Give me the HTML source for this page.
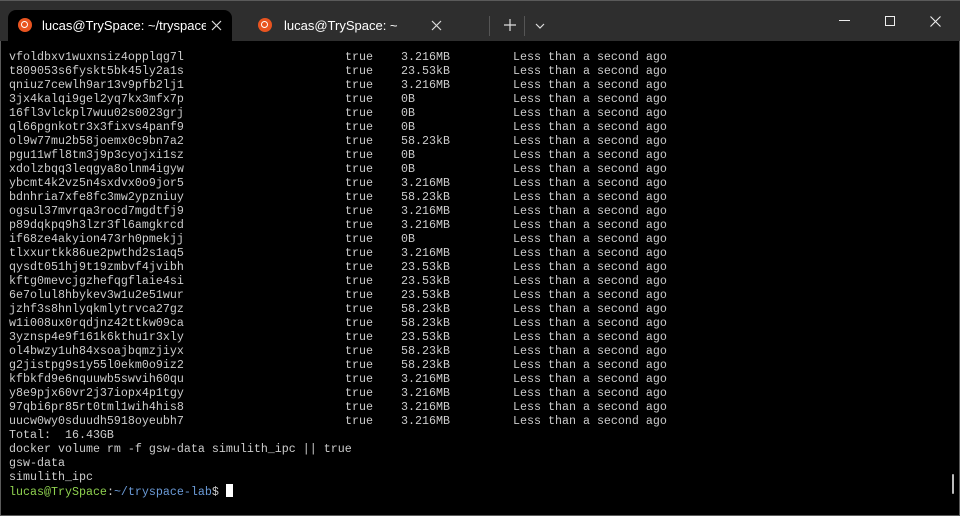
<!DOCTYPE html>
<html><head><meta charset="utf-8"><style>
*{margin:0;padding:0;box-sizing:border-box}
body{width:960px;height:516px;background:#0c0c0c;overflow:hidden;position:relative;font-family:"Liberation Sans",sans-serif}
#frame{position:absolute;left:0;top:0;width:960px;height:516px;border:1px solid #5a5a5a;background:#000}
#bar{position:absolute;left:0;top:0;width:960px;height:41px;background:#2e2e2e;border-top:1px solid #5a5a5a}
.tab{position:absolute;top:9px;height:32px;color:#fff;font-size:13px}
.tab.active{left:8px;width:224px;background:#000;border-radius:8px 8px 0 0}
.tab .t{position:absolute;left:34px;top:8px;white-space:nowrap;overflow:hidden;width:164px}
.ico{position:absolute;width:14px;height:14px;border-radius:50%;background:#e95420}
.ico:after{content:"";position:absolute;left:3px;top:3px;width:5px;height:5px;border:1.5px solid #fff;border-radius:50%}
#term{position:absolute;left:9px;top:50px;font-family:"Liberation Mono",monospace;font-size:11.67px;line-height:14px;color:#cccccc}
.r{position:relative;height:14px;white-space:pre}
.r span{position:absolute;top:0}
.c2{left:336px}.c3{left:392px}.c4{left:504px}
.g{color:#8fd14f}.b{color:#6b9bd8}
</style></head><body>
<div id="frame"></div>
<div id="bar">
 <div class="tab active"><div class="ico" style="left:10px;top:8px"></div><div class="t">lucas@TrySpace: ~/tryspace-l</div>
  <svg style="position:absolute;left:203px;top:10px" width="11" height="11"><path d="M1 1L10 10M10 1L1 10" stroke="#ddd" stroke-width="1.2"/></svg></div>
 <div class="tab" style="left:240px;width:240px"><div class="ico" style="left:18px;top:8px"></div><div class="t" style="left:44px">lucas@TrySpace: ~</div>
  <svg style="position:absolute;left:191px;top:10px" width="11" height="11"><path d="M1 1L10 10M10 1L1 10" stroke="#ddd" stroke-width="1.2"/></svg></div>
 <div style="position:absolute;left:489px;top:15px;width:1px;height:20px;background:#555"></div>
 <svg style="position:absolute;left:504px;top:18px" width="12" height="12"><path d="M6 0V12M0 6H12" stroke="#ddd" stroke-width="1.2"/></svg>
 <div style="position:absolute;left:524px;top:15px;width:1px;height:20px;background:#555"></div>
 <svg style="position:absolute;left:535px;top:22px" width="10" height="6"><path d="M1 1L5 5L9 1" stroke="#ddd" stroke-width="1.2" fill="none"/></svg>
 <div style="position:absolute;left:839px;top:19px;width:11px;height:1px;background:#eee"></div>
 <div style="position:absolute;left:885px;top:15px;width:10px;height:10px;border:1px solid #eee"></div>
 <svg style="position:absolute;left:930px;top:15px" width="11" height="11"><path d="M0.5 0.5L10.5 10.5M10.5 0.5L0.5 10.5" stroke="#eee" stroke-width="1.1"/></svg>
</div>
<div id="term">
<div class="r">vfoldbxv1wuxnsiz4opplqg7l<span class="c2">true</span><span class="c3">3.216MB</span><span class="c4">Less than a second ago</span></div>
<div class="r">t809053s6fyskt5bk45ly2a1s<span class="c2">true</span><span class="c3">23.53kB</span><span class="c4">Less than a second ago</span></div>
<div class="r">qniuz7cewlh9ar13v9pfb2lj1<span class="c2">true</span><span class="c3">3.216MB</span><span class="c4">Less than a second ago</span></div>
<div class="r">3jx4kalqi9gel2yq7kx3mfx7p<span class="c2">true</span><span class="c3">0B</span><span class="c4">Less than a second ago</span></div>
<div class="r">16fl3vlckpl7wuu02s0023grj<span class="c2">true</span><span class="c3">0B</span><span class="c4">Less than a second ago</span></div>
<div class="r">ql66pgnkotr3x3fixvs4panf9<span class="c2">true</span><span class="c3">0B</span><span class="c4">Less than a second ago</span></div>
<div class="r">ol9w77mu2b58joemx0c9bn7a2<span class="c2">true</span><span class="c3">58.23kB</span><span class="c4">Less than a second ago</span></div>
<div class="r">pgu11wfl8tm3j9p3cyojxi1sz<span class="c2">true</span><span class="c3">0B</span><span class="c4">Less than a second ago</span></div>
<div class="r">xdolzbqq3leqgya8olnm4igyw<span class="c2">true</span><span class="c3">0B</span><span class="c4">Less than a second ago</span></div>
<div class="r">ybcmt4k2vz5n4sxdvx0o9jor5<span class="c2">true</span><span class="c3">3.216MB</span><span class="c4">Less than a second ago</span></div>
<div class="r">bdnhria7xfe8fc3mw2ypzniuy<span class="c2">true</span><span class="c3">58.23kB</span><span class="c4">Less than a second ago</span></div>
<div class="r">ogsul37mvrqa3rocd7mgdtfj9<span class="c2">true</span><span class="c3">3.216MB</span><span class="c4">Less than a second ago</span></div>
<div class="r">p89dqkpq9h3lzr3fl6amgkrcd<span class="c2">true</span><span class="c3">3.216MB</span><span class="c4">Less than a second ago</span></div>
<div class="r">if68ze4akyion473rh0pmekjj<span class="c2">true</span><span class="c3">0B</span><span class="c4">Less than a second ago</span></div>
<div class="r">tlxxurtkk86ue2pwthd2s1aq5<span class="c2">true</span><span class="c3">3.216MB</span><span class="c4">Less than a second ago</span></div>
<div class="r">qysdt051hj9t19zmbvf4jvibh<span class="c2">true</span><span class="c3">23.53kB</span><span class="c4">Less than a second ago</span></div>
<div class="r">kftg0mevcjgzhefqgflaie4si<span class="c2">true</span><span class="c3">23.53kB</span><span class="c4">Less than a second ago</span></div>
<div class="r">6e7olul8hbykev3w1u2e51wur<span class="c2">true</span><span class="c3">23.53kB</span><span class="c4">Less than a second ago</span></div>
<div class="r">jzhf3s8hnlyqkmlytrvca27gz<span class="c2">true</span><span class="c3">58.23kB</span><span class="c4">Less than a second ago</span></div>
<div class="r">w1i008ux0rqdjnz42ttkw09ca<span class="c2">true</span><span class="c3">58.23kB</span><span class="c4">Less than a second ago</span></div>
<div class="r">3yznsp4e9f161k6kthu1r3xly<span class="c2">true</span><span class="c3">23.53kB</span><span class="c4">Less than a second ago</span></div>
<div class="r">ol4bwzy1uh84xsoajbqmzjiyx<span class="c2">true</span><span class="c3">58.23kB</span><span class="c4">Less than a second ago</span></div>
<div class="r">g2jistpg9s1y55l0ekm0o9iz2<span class="c2">true</span><span class="c3">58.23kB</span><span class="c4">Less than a second ago</span></div>
<div class="r">kfbkfd9e6nquuwb5swvih60qu<span class="c2">true</span><span class="c3">3.216MB</span><span class="c4">Less than a second ago</span></div>
<div class="r">y8e9pjx60vr2j37iopx4p1tgy<span class="c2">true</span><span class="c3">3.216MB</span><span class="c4">Less than a second ago</span></div>
<div class="r">97qbi6pr85rt0tml1wih4his8<span class="c2">true</span><span class="c3">3.216MB</span><span class="c4">Less than a second ago</span></div>
<div class="r">uucw0wy0sduudh5918oyeubh7<span class="c2">true</span><span class="c3">3.216MB</span><span class="c4">Less than a second ago</span></div>
<div class="r">Total:  16.43GB</div>
<div class="r">docker volume rm -f gsw-data simulith_ipc || true</div>
<div class="r">gsw-data</div>
<div class="r">simulith_ipc</div>
<div class="r"><b class="g" style="font-weight:normal">lucas@TrySpace</b>:<b class="b" style="font-weight:normal">~/tryspace-lab</b>$ <span style="position:relative;display:inline-block;width:7px;height:13px;background:#fff;vertical-align:-2px"></span></div>
</div>
<div style="position:absolute;left:952px;top:474px;width:2px;height:20px;background:#bbb;border-radius:1px"></div>
</body></html>
